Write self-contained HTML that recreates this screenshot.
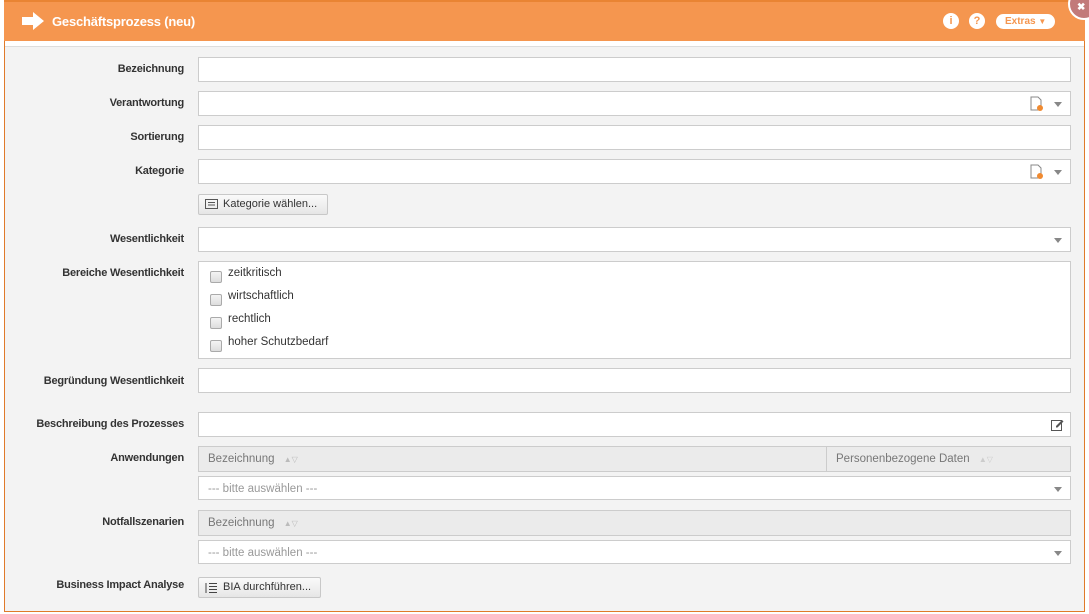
<!DOCTYPE html>
<html><head><meta charset="utf-8"><style>
*{box-sizing:border-box;margin:0;padding:0}
body{width:1089px;height:614px;background:#fff;font-family:"Liberation Sans",sans-serif;position:relative;overflow:hidden}
.panel{position:absolute;left:4px;top:0;width:1081px;height:612px;border:1px solid #e07a2a;border-top:none;background:#f3f3f3}
.hdr{position:absolute;left:4px;top:0;width:1081px;height:41px;background:#f5964f;border-top:2px solid #e98433}
.strip{position:absolute;left:5px;top:41px;width:1079px;height:6px;background:#fff;border-bottom:1px solid #ddd}
.title{position:absolute;left:52px;top:14px;color:#fff;font-weight:bold;font-size:13px;letter-spacing:-0.2px}
.lbl{position:absolute;right:905px;font-size:11px;font-weight:bold;color:#333;text-align:right;white-space:nowrap;letter-spacing:-0.2px}
.in{position:absolute;left:198px;width:873px;height:25px;background:#fff;border:1px solid #ccc}
.th{position:absolute;left:198px;width:873px;height:26px;background:#ebebeb;border:1px solid #ccc;font-size:11.5px;color:#777;padding:6px 9px}
.ph{font-size:11.5px;color:#999;padding:6px 9px}
.caret{position:absolute;right:8px;top:10px;width:0;height:0;border-left:4.5px solid transparent;border-right:4.5px solid transparent;border-top:5px solid #888}
.btn{position:absolute;left:198px;height:21px;background:linear-gradient(#fafafa,#e6e6e6);border:1px solid #c8c8c8;font-size:11px;color:#333;padding:3px 0 0 24px;border-radius:2px;white-space:nowrap}
.cb{position:absolute;left:11px;width:12px;height:12px;border:1px solid #aaa;border-radius:2px;background:linear-gradient(#f4f4f4,#ddd)}
.ct{position:absolute;left:29px;font-size:11.5px;color:#333}
.doc{position:absolute;right:26px;top:4px}
</style></head><body>
<div class="panel"></div>
<div class="hdr"></div>
<div class="strip"></div>
<svg style="position:absolute;left:22px;top:12px" width="22" height="18" viewBox="0 0 22 18"><path d="M0 5h11V0l11 9-11 9v-5H0z" fill="#fff"/></svg>
<div class="title">Geschäftsprozess (neu)</div>
<div style="position:absolute;left:943px;top:13px;width:16px;height:16px;border-radius:50%;background:#fff;color:#f5964f;font-weight:bold;font-size:11px;text-align:center;line-height:16px">i</div>
<div style="position:absolute;left:969px;top:13px;width:16px;height:16px;border-radius:50%;background:#fff;color:#f5964f;font-weight:bold;font-size:11px;text-align:center;line-height:16px">?</div>
<div style="position:absolute;left:996px;top:14px;width:59px;height:15px;border-radius:8px;background:#fff;color:#f5964f;font-weight:bold;font-size:10px;padding:2px 0 0 9px">Extras <span style="font-size:8px">▼</span></div>
<div style="position:absolute;left:1068px;top:-12px;width:32px;height:32px;border-radius:50%;background:#c27a7a;border:2px solid #fff;color:#fff;font-weight:bold;font-size:10px;padding:12px 0 0 7px">✖</div>

<div class="lbl" style="top:63px">Bezeichnung</div><div class="in" style="top:57px"></div>
<div class="lbl" style="top:97px">Verantwortung</div><div class="in" style="top:91px"><svg class="doc" width="14" height="16" viewBox="0 0 14 16"><path d="M1 1h7l3 3v10H1z" fill="#fff" stroke="#888"/><circle cx="10" cy="12" r="3" fill="#f08a30"/></svg><div class="caret"></div></div>
<div class="lbl" style="top:131px">Sortierung</div><div class="in" style="top:125px"></div>
<div class="lbl" style="top:165px">Kategorie</div><div class="in" style="top:159px"><svg class="doc" width="14" height="16" viewBox="0 0 14 16"><path d="M1 1h7l3 3v10H1z" fill="#fff" stroke="#888"/><circle cx="10" cy="12" r="3" fill="#f08a30"/></svg><div class="caret"></div></div>
<div class="btn" style="top:194px;width:130px"><svg style="position:absolute;left:6px;top:4px" width="13" height="10"><rect x=".5" y=".5" width="12" height="9" fill="none" stroke="#555"/><path d="M3 3.5h7M3 6h7" stroke="#555"/></svg>Kategorie wählen...</div>
<div class="lbl" style="top:233px">Wesentlichkeit</div><div class="in" style="top:227px"><div class="caret"></div></div>
<div class="lbl" style="top:267px">Bereiche Wesentlichkeit</div>
<div class="in" style="top:261px;height:98px">
<div class="cb" style="top:9px"></div><div class="ct" style="top:5px">zeitkritisch</div>
<div class="cb" style="top:32px"></div><div class="ct" style="top:28px">wirtschaftlich</div>
<div class="cb" style="top:55px"></div><div class="ct" style="top:51px">rechtlich</div>
<div class="cb" style="top:78px"></div><div class="ct" style="top:74px">hoher Schutzbedarf</div>
</div>
<div class="lbl" style="top:375px">Begründung Wesentlichkeit</div><div class="in" style="top:368px"></div>
<div class="lbl" style="top:418px">Beschreibung des Prozesses</div><div class="in" style="top:412px"><svg style="position:absolute;right:6px;top:5px" width="13" height="13"><rect x=".5" y="2.5" width="10" height="10" fill="none" stroke="#555"/><path d="M5 8l6-6 1.5 1.5-6 6H5z" fill="#555"/></svg></div>
<div class="lbl" style="top:452px">Anwendungen</div>
<div class="th" style="top:446px">Bezeichnung <span style="font-size:8px;color:#bbb;margin-left:6px">▲▽</span><div style="position:absolute;left:627px;top:0;height:24px;border-left:1px solid #ccc;padding:6px 9px;white-space:nowrap">Personenbezogene Daten <span style="font-size:8px;color:#ccc;margin-left:6px">▲▽</span></div></div>
<div class="in ph" style="top:476px;height:24px">--- bitte auswählen ---<div class="caret"></div></div>
<div class="lbl" style="top:516px">Notfallszenarien</div>
<div class="th" style="top:510px">Bezeichnung <span style="font-size:8px;color:#bbb;margin-left:6px">▲▽</span></div>
<div class="in ph" style="top:540px;height:24px">--- bitte auswählen ---<div class="caret"></div></div>
<div class="lbl" style="top:579px">Business Impact Analyse</div>
<div class="btn" style="top:577px;width:123px"><svg style="position:absolute;left:6px;top:4px" width="12" height="11"><path d="M4 1.5h8M4 4.5h8M4 7.5h8M4 10.5h8M1 1v10" stroke="#444"/></svg>BIA durchführen...</div>
</body></html>
